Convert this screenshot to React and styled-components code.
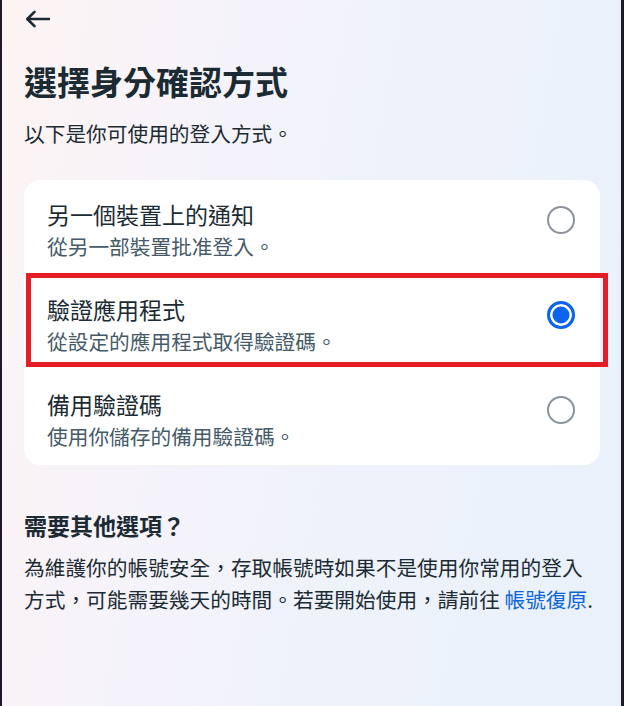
import React, { useState } from "react";
import styled, { createGlobalStyle } from "styled-components";

const GlobalStyle = createGlobalStyle`
  html, body { margin: 0; padding: 0; }
  body {
    font-family: "Noto Sans CJK TC", "Noto Sans", sans-serif;
    color: #1c2b33;
  }
  * { box-sizing: border-box; }
`;

const Page = styled.div`
  min-height: 100vh;
  border-left: 2px solid #1d1b2b;
  border-right: 3px solid #1d1b2b;
  padding: 0 21px 0 22px;
  background: linear-gradient(100deg, #fdf4f3 0%, #f6f3fa 28%, #eef2fb 60%, #e9f1fb 100%);
`;

const Header = styled.div`
  height: 38px;
  display: flex;
  align-items: center;
`;

const BackButton = styled.button`
  border: 0;
  background: none;
  padding: 0;
  width: 26px;
  height: 24px;
  display: flex;
  cursor: pointer;
  color: #1c2b33;
`;

const Title = styled.h1`
  margin: 22px 0 0;
  font-size: 33px;
  line-height: 43px;
  font-weight: 700;
`;

const Lead = styled.p`
  margin: 15px 0 0;
  font-size: 20.7px;
  line-height: 30px;
`;

const Card = styled.div`
  margin-top: 32px;
  background: #ffffff;
  border-radius: 16px;
`;

const Row = styled.label`
  position: relative;
  display: flex;
  align-items: flex-start;
  justify-content: space-between;
  height: 95px;
  padding: 19px 25px 0 23px;
  cursor: pointer;
`;

const RowText = styled.div`
  display: flex;
  flex-direction: column;
`;

const RowTitle = styled.span`
  font-size: 23px;
  line-height: 30px;
  color: #1c2b33;
`;

const RowSub = styled.span`
  font-size: 20.7px;
  line-height: 34px;
  color: #465a69;
`;

const Radio = styled.span`
  margin-top: 6.5px;
  width: 28px;
  height: 28px;
  border-radius: 50%;
  flex: none;
  border: ${(p) => (p.$on ? "3px solid #0a64ee" : "2.5px solid #8a939c")};
  background: ${(p) => (p.$on ? "#0a64ee" : "#fff")};
  box-shadow: ${(p) => (p.$on ? "inset 0 0 0 2.5px #fff" : "none")};
`;

const Highlight = styled.span`
  position: absolute;
  left: 2px;
  right: -8px;
  top: -2px;
  bottom: 3px;
  border: 5px solid #e31e27;
  pointer-events: none;
`;

const Heading = styled.h2`
  margin: 44px 0 0;
  font-size: 23px;
  line-height: 32px;
  font-weight: 700;
`;

const Para = styled.p`
  margin: 10px 0 0;
  font-size: 20.7px;
  line-height: 32px;
  color: #1c2b33;
`;

const Link = styled.a`
  color: #0a66d9;
  text-decoration: none;
`;

const options = [
  { title: "另一個裝置上的通知", sub: "從另一部裝置批准登入。" },
  { title: "驗證應用程式", sub: "從設定的應用程式取得驗證碼。" },
  { title: "備用驗證碼", sub: "使用你儲存的備用驗證碼。" },
];

export default function App() {
  const [sel, setSel] = useState(1);
  return (
    <>
      <GlobalStyle />
      <Page>
        <Header>
          <BackButton aria-label="返回">
            <svg width="26" height="24" viewBox="0 0 26 24" fill="none">
              <path
                d="M25 12H3.5M10.5 4.8L3.3 12l7.2 7.2"
                stroke="currentColor"
                strokeWidth="2.6"
                strokeLinecap="round"
                strokeLinejoin="round"
              />
            </svg>
          </BackButton>
        </Header>
        <Title>選擇身分確認方式</Title>
        <Lead>以下是你可使用的登入方式。</Lead>
        <Card>
          {options.map((o, i) => (
            <Row key={o.title} onClick={() => setSel(i)}>
              <RowText>
                <RowTitle>{o.title}</RowTitle>
                <RowSub>{o.sub}</RowSub>
              </RowText>
              <Radio $on={sel === i} />
              {i === 1 && <Highlight />}
            </Row>
          ))}
        </Card>
        <Heading>需要其他選項？</Heading>
        <Para>
          為維護你的帳號安全，存取帳號時如果不是使用你常用的登入方式，可能需要幾天的時間。若要開始使用，請前往{" "}
          <Link href="#">帳號復原</Link>.
        </Para>
      </Page>
    </>
  );
}
